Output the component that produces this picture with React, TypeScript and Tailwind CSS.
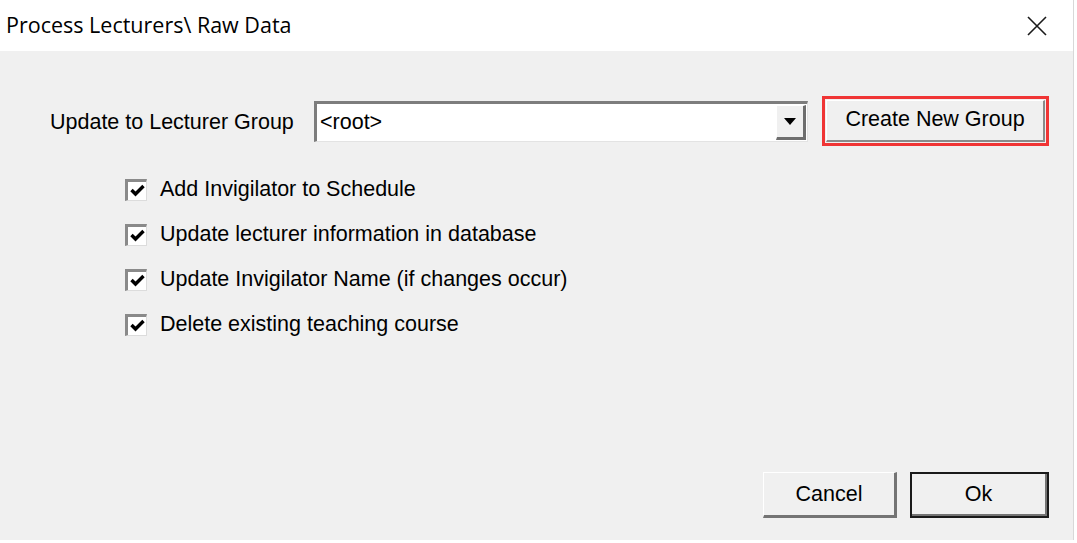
import React from "react";

const options = [
  "Add Invigilator to Schedule",
  "Update lecturer information in database",
  "Update Invigilator Name (if changes occur)",
  "Delete existing teaching course",
];

const CheckBox = ({ label }: { label: string }) => {
  return (
    <label className="flex items-center h-[45px]">
      <span className="w-[22px] h-[22px] flex-none bg-white border-t-[3px] border-l-[3px] border-[#8a8a8a] border-b border-r border-b-[#dcdcdc] border-r-[#dcdcdc] flex items-center justify-center">
        <svg width="15" height="13" viewBox="0 0 15 13">
          <path d="M1.5 6 L5.5 10 L13.5 2" stroke="#000" strokeWidth="3.4" fill="none" />
        </svg>
      </span>
      <span className="ml-[13px] text-[21.5px] text-black leading-none">{label}</span>
    </label>
  );
};

const App = () => {
  return (
    <div
      className="w-[1077px] h-[543px] bg-white flex flex-col overflow-hidden"
      style={{ fontFamily: '"Liberation Sans", Arial, sans-serif' }}
    >
      {/* title bar */}
      <div className="h-[51px] flex-none flex items-center justify-between pr-[26px] border-r border-[#d8d8d8] w-[1074px]">
        <span
          className="ml-[6px] text-[21.5px] text-black"
          style={{ fontFamily: '"Open Sans", "Noto Sans", sans-serif' }}
        >
          Process Lecturers\ Raw Data
        </span>
        <svg width="20" height="20" viewBox="0 0 20 20">
          <path d="M1 1 L19 19 M19 1 L1 19" stroke="#1a1a1a" strokeWidth="1.6" />
        </svg>
      </div>

      {/* dialog body */}
      <div className="w-[1074px] h-[489px] flex-none bg-[#f0f0f0] border-r border-[#d8d8d8] flex flex-col pt-[45px] pl-[50px] pr-[24px] pb-[22px]">
        <div className="flex items-center h-[50px]">
          <span className="text-[21.5px] text-black w-[264px] pt-[2px]">Update to Lecturer Group</span>
          <div className="w-[494px] h-[41px] bg-white flex items-stretch border-t-[3px] border-l-[3px] border-[#7d7d7d] border-b border-r border-b-[#e3e3e3] border-r-[#e3e3e3]">
            <span className="flex-1 text-[21.5px] text-black flex items-center pl-[3px]">&lt;root&gt;</span>
            <span className="w-[30px] my-[1px] mr-[1px] bg-[#f0f0f0] border-t border-l border-white border-b-[3px] border-r-[3px] border-b-[#6e6e6e] border-r-[#6e6e6e] flex items-center justify-center">
              <svg width="12" height="7" viewBox="0 0 12 7">
                <path d="M0 0 L12 0 L6 7 Z" fill="#000" />
              </svg>
            </span>
          </div>
          <div className="ml-[14px] w-[227px] h-[50px] border-[3px] border-[#f03535] p-[1px]">
            <button className="w-full h-full bg-[#f0f0f0] border-t border-l border-white border-b-[2px] border-r-[2px] border-b-[#8a8a8a] border-r-[#8a8a8a] text-[21.5px] text-black pb-[2px]">
              Create New Group
            </button>
          </div>
        </div>

        <div className="mt-[21px] ml-[75px] flex flex-col">
          {options.map((o) => (
            <CheckBox key={o} label={o} />
          ))}
        </div>

        <div className="mt-auto flex justify-end gap-[13px]">
          <button className="w-[134px] h-[46px] bg-[#f0f0f0] border-t border-l border-white border-b-[3px] border-r-[3px] border-b-[#747474] border-r-[#747474] text-[21.5px] text-black">
            Cancel
          </button>
          <button className="w-[139px] h-[46px] bg-[#f0f0f0] border-2 border-[#1a1a1a] text-[21.5px] text-black">
            <span className="flex items-center justify-center w-full h-full border-b-2 border-r-2 border-[#747474]">
              Ok
            </span>
          </button>
        </div>
      </div>
    </div>
  );
};

export default App;
